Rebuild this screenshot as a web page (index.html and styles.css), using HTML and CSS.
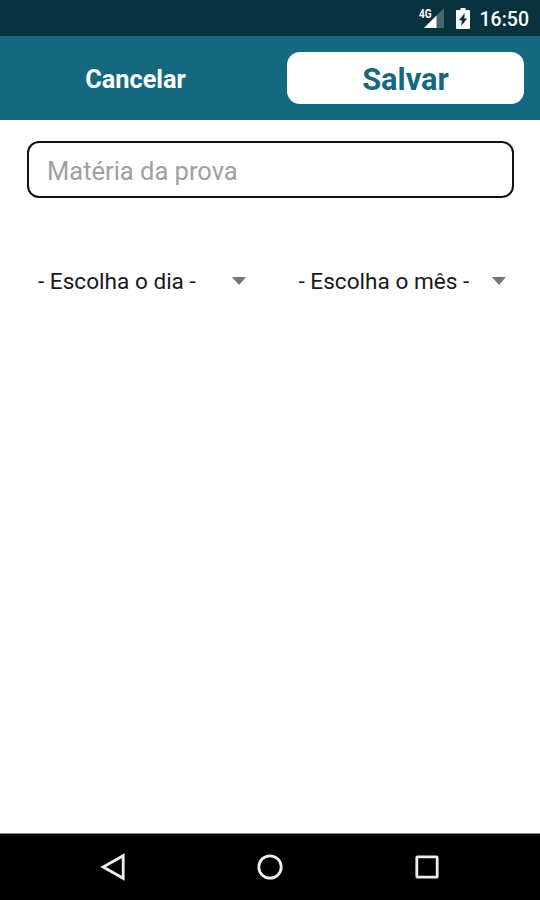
FILE: index.html
```html
<!DOCTYPE html>
<html lang="pt-BR">
<head>
    <meta charset="UTF-8">
    <meta name="viewport" content="width=device-width, initial-scale=1.0">
    <title>Nova prova</title>
    <link rel="stylesheet" href="styles.css">
</head>
<body>
    <div class="status-bar">
        <svg class="signal" width="28" height="24" viewBox="0 0 28 24">
            <path d="M26 2V22H6z" fill="#47656e"/>
            <path d="M18.500 9.500V22H6z" fill="#fff"/>
            <text class="network" x="1" y="11.500" textLength="12.500" lengthAdjust="spacingAndGlyphs">4G</text>
        </svg>
        <svg class="battery" width="14" height="21" viewBox="0 0 14 21">
            <path d="M4.500 0h5v2H13q1 0 1 1v17q0 1-1 1H1q-1 0-1-1V3q0-1 1-1h3.500z" fill="#fff"/>
            <path d="M8.800 5L2.800 12.300h3L5.200 18l6-7.600H8.200z" fill="#08323d"/>
        </svg>
        <span class="clock">16:50</span>
    </div>
    <div class="toolbar">
        <button class="btn cancel">Cancelar</button>
        <button class="btn save">Salvar</button>
    </div>
    <div class="content">
        <input class="subject" type="text" placeholder="Matéria da prova">
        <div class="spinners">
            <div class="spinner">
                <span>- Escolha o dia -</span>
                <svg width="14" height="8" viewBox="0 0 14 8"><path d="M0 0h14L7 8z" fill="#757575"/></svg>
            </div>
            <div class="spinner">
                <span>- Escolha o mês -</span>
                <svg width="14" height="8" viewBox="0 0 14 8"><path d="M0 0h14L7 8z" fill="#757575"/></svg>
            </div>
        </div>
    </div>
    <div class="nav-bar">
        <svg width="28" height="28" viewBox="0 0 28 28"><path d="M24.200 2.700V25.300L4.200 14z"/></svg>
        <svg width="28" height="28" viewBox="0 0 28 28"><circle cx="14" cy="14" r="11.200"/></svg>
        <svg width="28" height="28" viewBox="0 0 28 28"><rect x="3.800" y="3.800" width="20.400" height="20.400" rx="0.800"/></svg>
    </div>
</body>
</html>
```
FILE: styles.css
```css
* {
    box-sizing: border-box;
}
body {
    font-family: Roboto, 'Liberation Sans', sans-serif;
    background-color: #ffffff;
    margin: 0;
    height: 900px;
    display: flex;
    flex-direction: column;
    overflow: hidden;
}
.status-bar {
    height: 36px;
    background-color: #08323d;
    color: #ffffff;
    display: flex;
    justify-content: flex-end;
    align-items: center;
    padding-right: 11px;
}
.signal {
    margin-right: 10px;
}
.network {
    font-size: 13px;
    font-weight: bold;
    fill: #ffffff;
}
.battery {
    margin-right: 10px;
}
.clock {
    font-size: 19.5px;
    font-weight: 500;
    line-height: 24px;
    padding-top: 3px;
}
.toolbar {
    height: 84px;
    background-color: #15697f;
    display: flex;
    align-items: center;
    padding: 0 16px 0 17px;
    gap: 33px;
}
.btn {
    font-family: inherit;
    font-weight: bold;
    height: 52px;
    width: 237px;
    border: none;
    border-radius: 13px;
    padding: 0;
    cursor: pointer;
}
.cancel {
    background-color: transparent;
    color: #ffffff;
    font-size: 25.3px;
    padding-top: 3px;
}
.save {
    background-color: #ffffff;
    color: #15697f;
    font-size: 30.8px;
    padding-top: 3px;
}
.content {
    flex: 1;
    padding: 21px 26px 0 27px;
}
.subject {
    display: block;
    width: 100%;
    height: 57px;
    border: 2px solid #111111;
    border-radius: 12px;
    background-color: #ffffff;
    font-family: inherit;
    font-size: 25.5px;
    padding: 3px 18px 0 18px;
    outline: none;
}
.subject::placeholder {
    color: #a0a0a0;
    opacity: 1;
}
.spinners {
    display: flex;
    gap: 53px;
    margin-top: 66px;
    padding: 0 8px 0 11px;
}
.spinner {
    flex: 1;
    display: flex;
    justify-content: space-between;
    align-items: center;
    height: 34px;
    font-size: 22.6px;
    color: #1a1a1a;
}
.nav-bar {
    height: 67px;
    background-color: #000000;
    border-top: 1px solid #888888;
    display: flex;
    justify-content: center;
    align-items: center;
    gap: 129px;
    padding-bottom: 1px;
}
.nav-bar svg {
    fill: none;
    stroke: #eeeeee;
    stroke-width: 2.8;
}
```
